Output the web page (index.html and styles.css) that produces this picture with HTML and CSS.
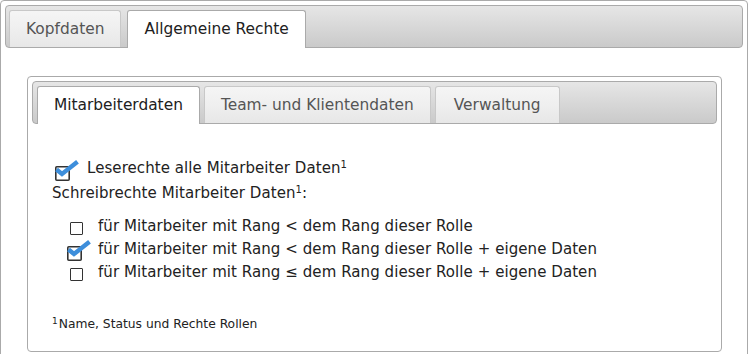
FILE: index.html
```html
<!DOCTYPE html>
<html lang="de">
<head>
<meta charset="utf-8">
<title>Rechte</title>
<link rel="stylesheet" href="styles.css">
</head>
<body>
<div class="tabs outer">
  <div class="tabbar">
    <div class="tab">Kopfdaten</div>
    <div class="tab active">Allgemeine Rechte</div>
  </div>
  <div class="panel outer-panel">
    <div class="tabs inner">
      <div class="tabbar">
        <div class="tab active">Mitarbeiterdaten</div>
        <div class="tab">Team- und Klientendaten</div>
        <div class="tab">Verwaltung</div>
      </div>
      <div class="panel inner-panel">
        <div class="row first">
          <svg class="chk chk-first" width="26" height="22" viewBox="0 0 26 22">
            <rect x="1.8" y="7.8" width="13.4" height="13.4" rx="1" fill="#fff" stroke="#333" stroke-width="1.6"/>
            <polyline points="2.5,10.5 8,15 23.5,2.8" fill="none" stroke="#3d8edb" stroke-width="4.4" stroke-linejoin="miter"/>
          </svg>
          <span>Leserechte alle Mitarbeiter Daten<sup class="fn">1</sup></span>
        </div>
        <div class="row label"><span>Schreibrechte Mitarbeiter Daten<sup class="fn">1</sup>:</span></div>
        <div class="items">
          <div class="row item">
            <span class="slot"><span class="box"></span></span>
            <span>für Mitarbeiter mit Rang &lt; dem Rang dieser Rolle</span>
          </div>
          <div class="row item">
            <span class="slot">
              <svg class="chk" width="26" height="22" viewBox="0 0 26 22">
                <rect x="1.8" y="7.8" width="13.4" height="13.4" rx="1" fill="#fff" stroke="#333" stroke-width="1.6"/>
                <polyline points="2.5,10.5 8,15 23.5,2.8" fill="none" stroke="#3d8edb" stroke-width="4.4" stroke-linejoin="miter"/>
              </svg>
            </span>
            <span>für Mitarbeiter mit Rang &lt; dem Rang dieser Rolle + eigene Daten</span>
          </div>
          <div class="row item">
            <span class="slot"><span class="box"></span></span>
            <span>für Mitarbeiter mit Rang ≤ dem Rang dieser Rolle + eigene Daten</span>
          </div>
        </div>
        <div class="footnote"><sup class="fn small">1</sup>Name, Status und Rechte Rollen</div>
      </div>
    </div>
  </div>
</div>
</body>
</html>
```
FILE: styles.css
```css
html, body {
  margin: 0;
  padding: 0;
  background: #fff;
}
body {
  font-family: "DejaVu Sans", Verdana, sans-serif;
  font-size: 15px;
  color: #222;
}
.tabs {
  border: 1px solid #aaa;
  border-radius: 4px;
  padding: 4px;
  background: #fff;
}
.outer {
  width: 738px;
}
.tabbar {
  display: flex;
  gap: 5px;
  height: 37px;
  padding: 4px 3px 0 3px;
  border: 1px solid #aaa;
  border-radius: 4px;
  background: linear-gradient(#e6e6e6, #cacaca);
}
.inner .tabbar {
  gap: 4px;
}
.tab {
  height: 37px;
  box-sizing: border-box;
  padding: 0 16px;
  border: 1px solid #c8c8c8;
  border-bottom: none;
  border-radius: 3px 3px 0 0;
  background: linear-gradient(#f5f5f5 0%, #efefef 50%, #e7e7e7 100%);
  color: #555;
  font-size: 15.4px;
  line-height: 36px;
  white-space: nowrap;
}
.inner .tab:last-child {
  padding: 0 18px;
}
.tab.active {
  height: 38px;
  margin-bottom: -1px;
  border-color: #aaa;
  background: #fff;
  color: #212121;
  position: relative;
}
.outer .tabbar > .tab.active {
  margin-left: 1px;
}
.outer-panel {
  padding: 28px 21px 28px 22px;
}
.inner-panel {
  padding: 32px 20px 15px 20px;
  letter-spacing: 0.07px;
}
.row {
  display: flex;
  align-items: flex-start;
  height: 23px;
  line-height: 23px;
  white-space: nowrap;
}
.row.first {
  height: 25px;
  line-height: 25px;
}
.row.label {
  height: 24px;
  line-height: 24px;
}
.chk {
  display: block;
  flex: none;
}
.chk-first {
  margin: 3px 7px 0 2px;
}
.items {
  margin-top: 10px;
}
.slot {
  display: flex;
  width: 32px;
  flex: none;
  margin-left: 14px;
}
.item .chk {
  margin-top: 1px;
}
.box {
  display: block;
  width: 11px;
  height: 11px;
  margin: 7px 0 0 4px;
  border: 1px solid #333;
  border-radius: 1px;
  background: #fff;
}
.fn {
  font-size: 10px;
  line-height: 0;
  vertical-align: 5px;
  letter-spacing: 0;
}
.footnote {
  margin-top: 32px;
  font-size: 12.3px;
  line-height: 16px;
  letter-spacing: 0;
  white-space: nowrap;
}
.fn.small {
  font-size: 9px;
  vertical-align: 4px;
  margin-right: 1px;
}
```
